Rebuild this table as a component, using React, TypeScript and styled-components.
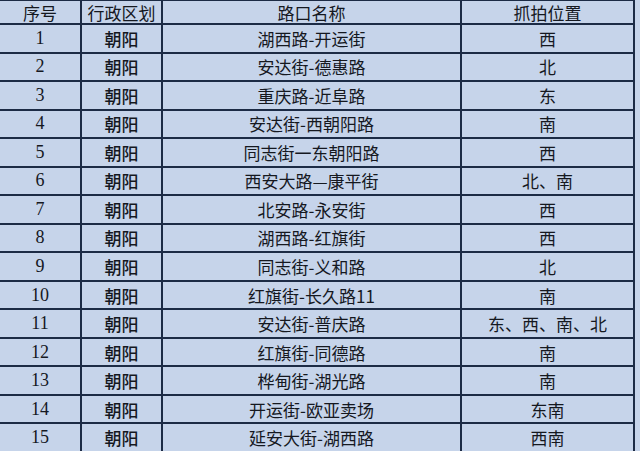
import styled, { createGlobalStyle } from "styled-components";

const GlobalStyle = createGlobalStyle`
  html, body {
    margin: 0;
    padding: 0;
    background: #c6d4ea;
  }
`;

interface Row {
	no: number;
	district: string;
	crossing: string;
	direction: string;
}

const ROWS: Row[] = [
	{ no: 1, district: "朝阳", crossing: "湖西路-开运街", direction: "西" },
	{ no: 2, district: "朝阳", crossing: "安达街-德惠路", direction: "北" },
	{ no: 3, district: "朝阳", crossing: "重庆路-近阜路", direction: "东" },
	{ no: 4, district: "朝阳", crossing: "安达街-西朝阳路", direction: "南" },
	{ no: 5, district: "朝阳", crossing: "同志街一东朝阳路", direction: "西" },
	{ no: 6, district: "朝阳", crossing: "西安大路—康平街", direction: "北、南" },
	{ no: 7, district: "朝阳", crossing: "北安路-永安街", direction: "西" },
	{ no: 8, district: "朝阳", crossing: "湖西路-红旗街", direction: "西" },
	{ no: 9, district: "朝阳", crossing: "同志街-义和路", direction: "北" },
	{ no: 10, district: "朝阳", crossing: "红旗街-长久路11", direction: "南" },
	{ no: 11, district: "朝阳", crossing: "安达街-普庆路", direction: "东、西、南、北" },
	{ no: 12, district: "朝阳", crossing: "红旗街-同德路", direction: "南" },
	{ no: 13, district: "朝阳", crossing: "桦甸街-湖光路", direction: "南" },
	{ no: 14, district: "朝阳", crossing: "开运街-欧亚卖场", direction: "东南" },
	{ no: 15, district: "朝阳", crossing: "延安大街-湖西路", direction: "西南" },
];

const App = () => (
	<>
		<GlobalStyle />
		<Page>
			<Table>
				<HeadCell>序号</HeadCell>
				<HeadCell>行政区划</HeadCell>
				<HeadCell>路口名称</HeadCell>
				<HeadCell>抓拍位置</HeadCell>
				{ROWS.map((r) => (
					<Line key={r.no}>
						<NumCell>{r.no}</NumCell>
						<Cell $bold>{r.district}</Cell>
						<Cell>{r.crossing}</Cell>
						<Cell>{r.direction}</Cell>
					</Line>
				))}
			</Table>
		</Page>
	</>
);

const Page = styled.div`
  width: 640px;
  height: 451px;
  display: flex;
  background: #c6d4ea;
  overflow: hidden;
`;

const Table = styled.div`
  width: 635px;
  height: 451px;
  box-sizing: border-box;
  display: grid;
  grid-template-columns: 80px 79px 297px 171px;
  grid-template-rows: 22px repeat(15, 1fr);
  gap: 2px;
  padding: 1px 2px 0 0;
  background: #1c2b45;
`;

const Line = styled.div`
  display: contents;
`;

const Cell = styled.div<{ $bold?: boolean }>`
  background: #c6d4ea;
  display: flex;
  align-items: center;
  justify-content: center;
  font-family: "Noto Sans CJK SC", sans-serif;
  font-size: 17px;
  font-weight: ${(p) => (p.$bold ? 500 : 400)};
  color: #15181f;
  white-space: nowrap;
`;

const HeadCell = styled(Cell)`
  font-size: 17px;
  line-height: 1;
`;

const NumCell = styled(Cell)`
  font-family: "Liberation Serif", serif;
  font-size: 18px;
`;

export default App;
